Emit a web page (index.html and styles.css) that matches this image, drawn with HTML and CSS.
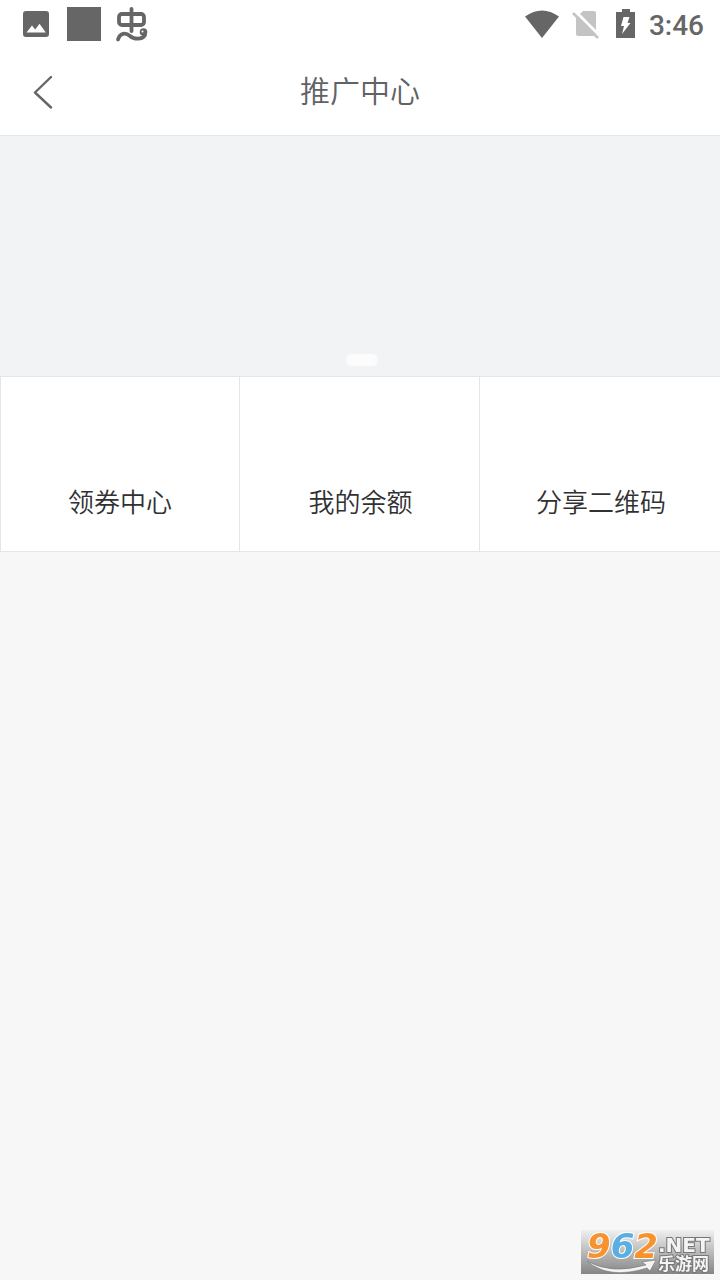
FILE: index.html
```html
<!DOCTYPE html>
<html lang="zh-CN">
<head>
    <meta charset="UTF-8">
    <meta name="viewport" content="width=device-width, initial-scale=1">
    <title>推广中心</title>
    <link rel="stylesheet" href="styles.css">
</head>
<body>
    <div class="status-bar">
        <div class="status-left">
            <svg width="26" height="26" viewBox="0 0 26 26">
                <rect width="26" height="26" rx="3" fill="#666"/>
                <path d="M3.5 21.500 9 14.500l3.200 4 4.300-5.800 6.300 8.800z" fill="#fff"/>
            </svg>
            <span class="square"></span>
            <svg width="34" height="36" viewBox="0 0 34 36" fill="none" stroke="#666" stroke-width="3.800" stroke-linecap="round">
                <rect x="4" y="8" width="25" height="11" rx="3"/>
                <path d="M16.500 3v22"/>
                <path d="M3 33.500c2-7 8-7 12-3.500s12 4 15-1"/>
                <circle cx="28.500" cy="26" r="3.800" fill="#666" stroke="none"/>
                <circle cx="27.500" cy="25.500" r="1" fill="#fff" stroke="none"/>
            </svg>
        </div>
        <div class="status-right">
            <svg width="36" height="30" viewBox="0 0 36 30">
                <path d="M1 7.500Q18-4.500 35 7.500L18 29z" fill="#666"/>
            </svg>
            <svg width="28" height="30" viewBox="0 0 28 30">
                <path d="M11 2h11q2 0 2 2v21q0 2-2 2H6q-2 0-2-2V9z" fill="#c4c4c4"/>
                <path d="M3 2l25 25" stroke="#fff" stroke-width="3"/>
                <path d="M1 4l25 25" stroke="#c4c4c4" stroke-width="2.500"/>
            </svg>
            <svg class="battery" width="20" height="30" viewBox="0 0 20 30">
                <path d="M6 0h8v3h5v26H0V3h6z" fill="#666"/>
                <path d="M7.500 8h6l-2 6h3L6 25l2-8H5z" fill="#fff"/>
            </svg>
            <span class="time">3:46</span>
        </div>
    </div>

    <header class="nav">
        <button class="back" type="button" aria-label="返回">
            <svg width="20" height="34" viewBox="0 0 20 34" fill="none" stroke="#666" stroke-width="2.400" stroke-linecap="round" stroke-linejoin="round">
                <path d="M18 2 2 17.500 18 32.500"/>
            </svg>
        </button>
        <h1>推广中心</h1>
    </header>

    <div class="banner">
        <span class="dot"></span>
    </div>

    <nav class="menu">
        <a href="#coupon">领券中心</a>
        <a href="#balance">我的余额</a>
        <a href="#qrcode">分享二维码</a>
    </nav>

    <div class="watermark">
        <svg class="swoosh" width="133" height="44" viewBox="0 0 133 44">
            <path d="M6 31q24 14 59 4l-4-3 14-2-6 11-3-3q-38 12-60-7z" fill="#f4f4f4" stroke="#777" stroke-width=".6"/>
        </svg>
        <div class="mark-num"><span class="orange">9</span><span class="blue">6</span><span class="orange">2</span></div>
        <div class="mark-side">
            <div class="mark-net">.NET</div>
            <div class="mark-name">乐游网</div>
        </div>
    </div>
</body>
</html>
```

FILE: styles.css
```css
* {
    box-sizing: border-box;
}

body {
    margin: 0;
    background-color: #f7f7f7;
    font-family: "Noto Sans CJK SC", sans-serif;
    color: #333;
}

.status-bar {
    display: flex;
    justify-content: space-between;
    align-items: center;
    height: 48px;
    padding: 0 16px 0 23px;
    background-color: #fff;
}

.status-left,
.status-right {
    display: flex;
    align-items: center;
    gap: 14px;
}

.status-right {
    gap: 12px;
}

.battery {
    margin: 0 1px 0 4px;
}

.square {
    width: 34px;
    height: 34px;
    margin-left: 4px;
    background-color: #666;
}

.time {
    padding-top: 4px;
    font-family: Roboto, sans-serif;
    font-size: 28px;
    font-weight: 500;
    line-height: 44px;
    color: #666;
}

.nav {
    display: grid;
    grid-template-columns: 88px 1fr 88px;
    align-items: center;
    height: 88px;
    background-color: #fff;
    border-bottom: 1px solid #e4e7ea;
}

.nav h1 {
    margin: 0;
    padding-bottom: 6px;
    text-align: center;
    font-size: 30px;
    font-weight: 350;
    line-height: 44px;
    color: #606266;
}

.back {
    display: flex;
    align-items: center;
    height: 88px;
    padding: 0 0 0 33px;
    border: 0;
    background: none;
    cursor: pointer;
}

.banner {
    display: flex;
    justify-content: center;
    align-items: flex-end;
    height: 240px;
    padding: 0 0 10px 4px;
    background-color: #f2f3f5;
}

.dot {
    width: 32px;
    height: 12px;
    border-radius: 6px;
    background-color: #fcfcfc;
}

.menu {
    display: grid;
    grid-template-columns: repeat(3, 1fr);
    border-top: 1px solid #e4e7ea;
}

.menu a {
    padding: 105px 0 31px 2px;
    background-color: #fff;
    border-right: 1px solid #e4e7ea;
    border-bottom: 1px solid #e4e7ea;
    text-align: center;
    text-decoration: none;
    font-size: 26px;
    font-weight: 350;
    line-height: 38px;
    color: #303133;
}

.menu a:first-child {
    padding-left: 0;
    border-left: 1px solid #e4e7ea;
}

.menu a:last-child {
    border-right: 0;
}

.watermark {
    position: fixed;
    right: 6px;
    bottom: 6px;
    display: flex;
    width: 133px;
    height: 44px;
    padding-left: 6px;
    background: linear-gradient(#f0f0f0, #858585);
    white-space: nowrap;
}

.swoosh {
    position: absolute;
    top: 0;
    left: 0;
}

.mark-num {
    width: 71px;
    font: italic bold 34px/32px "DejaVu Sans", sans-serif;
    -webkit-text-stroke: 2px #fff;
    paint-order: stroke fill;
}

.orange {
    color: #f7922d;
}

.blue {
    color: #5aaee0;
}

.mark-side {
    padding-top: 6px;
    color: #f4f4f4;
    -webkit-text-stroke: 2px #777;
    paint-order: stroke fill;
}

.mark-net {
    font: bold 20px/18px "DejaVu Sans", sans-serif;
}

.mark-name {
    font: bold 17px/18px "Noto Sans CJK SC", sans-serif;
}
```
